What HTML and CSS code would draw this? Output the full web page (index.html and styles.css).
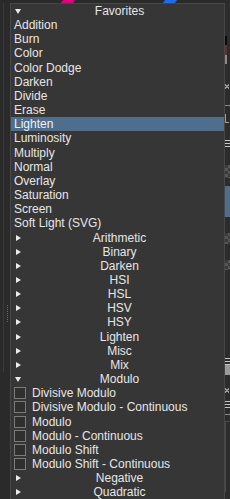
FILE: index.html
```html
<!DOCTYPE html>
<html>
<head>
<meta charset="utf-8">
<link rel="stylesheet" href="styles.css">
</head>
<body>
<div class="topbar">
  <span class="mark mark-pink"></span>
  <span class="mark mark-blue"></span>
</div>
<div class="main">
  <div class="side-left">
    <div class="panel-line"></div>
    <div class="grip"></div>
  </div>
  <div class="menu">
    <div class="row header"><span class="tri down"></span><span class="label">Favorites</span></div>
    <div class="row item">Addition</div>
    <div class="row item">Burn</div>
    <div class="row item">Color</div>
    <div class="row item">Color Dodge</div>
    <div class="row item">Darken</div>
    <div class="row item">Divide</div>
    <div class="row item">Erase</div>
    <div class="row item selected">Lighten</div>
    <div class="row item">Luminosity</div>
    <div class="row item">Multiply</div>
    <div class="row item">Normal</div>
    <div class="row item">Overlay</div>
    <div class="row item">Saturation</div>
    <div class="row item">Screen</div>
    <div class="row item">Soft Light (SVG)</div>
    <div class="row header"><span class="tri right"></span><span class="label">Arithmetic</span></div>
    <div class="row header"><span class="tri right"></span><span class="label">Binary</span></div>
    <div class="row header"><span class="tri right"></span><span class="label">Darken</span></div>
    <div class="row header"><span class="tri right"></span><span class="label">HSI</span></div>
    <div class="row header"><span class="tri right"></span><span class="label">HSL</span></div>
    <div class="row header"><span class="tri right"></span><span class="label">HSV</span></div>
    <div class="row header"><span class="tri right"></span><span class="label">HSY</span></div>
    <div class="row header"><span class="tri right"></span><span class="label">Lighten</span></div>
    <div class="row header"><span class="tri right"></span><span class="label">Misc</span></div>
    <div class="row header"><span class="tri right"></span><span class="label">Mix</span></div>
    <div class="row header"><span class="tri down"></span><span class="label">Modulo</span></div>
    <div class="row check"><span class="box"></span>Divisive Modulo</div>
    <div class="row check"><span class="box"></span>Divisive Modulo - Continuous</div>
    <div class="row check"><span class="box"></span>Modulo</div>
    <div class="row check"><span class="box"></span>Modulo - Continuous</div>
    <div class="row check"><span class="box"></span>Modulo Shift</div>
    <div class="row check"><span class="box"></span>Modulo Shift - Continuous</div>
    <div class="row header"><span class="tri right"></span><span class="label">Negative</span></div>
    <div class="row header"><span class="tri right"></span><span class="label">Quadratic</span></div>
  </div>
  <div class="side-right">
    <div class="sp" style="height:33px"></div>
    <div class="sb sb-black"></div>
    <div class="sb sb-red"></div>
    <div class="sb sb-gray"></div>
    <div class="sp" style="height:20px"></div>
    <div class="glyph-x"></div>
    <div class="sp" style="height:16px"></div>
    <div class="hline"></div>
    <div class="sp" style="height:8px"></div>
    <div class="glyph-v"></div>
    <div class="sp" style="height:17px"></div>
    <div class="lines"></div>
    <div class="sp" style="height:18px"></div>
    <div class="checker" style="height:13px"></div>
    <div class="sp" style="height:8px"></div>
    <div class="blue"></div>
    <div class="sp" style="height:16px"></div>
    <div class="checker" style="height:11px"></div>
    <div class="sp" style="height:16px"></div>
    <div class="checker" style="height:10px"></div>
    <div class="sp" style="height:88px"></div>
    <div class="lines"></div>
    <div class="block"></div>
    <div class="sp" style="height:13px"></div>
    <div class="glyph-x"></div>
    <div class="sp" style="height:8px"></div>
    <div class="lines"></div>
    <div class="sp" style="height:6px"></div>
    <div class="hline"></div>
    <div class="frame"></div>
  </div>
</div>
</body>
</html>
```

FILE: styles.css
```css
html, body {
  margin: 0;
  padding: 0;
}
body {
  width: 230px;
  height: 499px;
  overflow: hidden;
  background: #2a2a2a;
  font-family: "Liberation Sans", Arial, sans-serif;
  font-size: 12px;
  color: #e6e6e6;
}
.topbar {
  height: 3px;
  position: relative;
  background: #2a2a2a;
}
.mark {
  position: absolute;
  top: 0;
  height: 3px;
  width: 12px;
  transform: skewX(-35deg);
}
.mark-pink {
  left: 62px;
  background: #e4007c;
}
.mark-blue {
  left: 164px;
  background: #1a6df0;
}
.main {
  display: flex;
  align-items: flex-start;
}
.side-left {
  width: 10px;
  flex: none;
  position: relative;
  height: 496px;
}
.panel-line {
  position: absolute;
  left: 3px;
  top: 0;
  width: 1px;
  height: 369px;
  background: #3a3a3a;
}
.grip {
  position: absolute;
  left: 7px;
  top: 302px;
  width: 1px;
  height: 17px;
  background: repeating-linear-gradient(to bottom, #6a6a6a 0 1px, transparent 1px 2px);
}
.menu {
  width: 213px;
  flex: none;
  background: #363636;
  border: 1px solid #474747;
  border-bottom: none;
  display: flex;
  flex-direction: column;
}
.row {
  height: 14.16px;
  line-height: 14.16px;
  white-space: nowrap;
  display: flex;
  align-items: center;
  padding-left: 3px;
}
.item.selected {
  background: #4f6e8e;
  color: #eef2f6;
}
.header {
  position: relative;
  justify-content: center;
}
.header .label {
  padding-left: 1px;
}
.tri {
  position: absolute;
  left: 4px;
  width: 0;
  height: 0;
}
.tri.down {
  top: 5px;
  border-left: 3.2px solid transparent;
  border-right: 3.2px solid transparent;
  border-top: 5.5px solid #ececec;
}
.tri.right {
  top: 4px;
  left: 5px;
  border-top: 3px solid transparent;
  border-bottom: 3px solid transparent;
  border-left: 5.5px solid #ececec;
}
.check .box {
  width: 10px;
  height: 10px;
  border: 1px solid #7a7a7a;
  background: #2f2f2f;
  margin-right: 6px;
  flex: none;
}
.side-right {
  width: 5px;
  flex: none;
  display: flex;
  flex-direction: column;
  height: 496px;
  background: #2c2c2c;
}
.sp {
  flex: none;
}
.sb {
  width: 2px;
  margin-left: 0;
}
.sb-black { height: 9px; background: #0a0a0a; }
.sb-red { height: 10px; background: #6a2d2d; }
.sb-gray { height: 9px; background: #8a8a8a; }
.glyph-x {
  height: 5px;
  width: 4px;
  background: linear-gradient(45deg, transparent 40%, #9a9a9a 40% 60%, transparent 60%),
              linear-gradient(-45deg, transparent 40%, #9a9a9a 40% 60%, transparent 60%);
}
.hline {
  height: 1px;
  width: 5px;
  background: #8a8a8a;
}
.glyph-v {
  height: 8px;
  width: 3px;
  border-left: 1px solid #a0a0a0;
  border-bottom: 1px solid #a0a0a0;
}
.lines {
  height: 7px;
  width: 5px;
  background: repeating-linear-gradient(to bottom, #c8c8c8 0 1px, transparent 1px 3px);
}
.checker {
  width: 5px;
  background: repeating-conic-gradient(#555 0 25%, #3a3a3a 0 50%) 0 0 / 6px 6px;
}
.blue {
  height: 31px;
  width: 5px;
  background: #4f6e8e;
}
.block {
  height: 10px;
  width: 5px;
  background: #9a9a9a;
}
.frame {
  margin-top: 6px;
  height: 70px;
  width: 4px;
  border-left: 1px solid #4a4a4a;
  border-top: 1px solid #4a4a4a;
}
```
